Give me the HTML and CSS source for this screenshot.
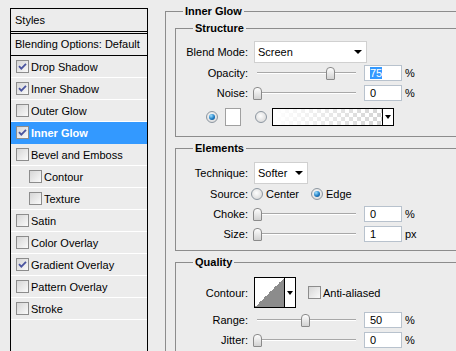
FILE: index.html
```html
<!DOCTYPE html>
<html lang="en">
<head>
    <meta charset="UTF-8">
    <meta name="viewport" content="width=device-width, initial-scale=1.0">
    <title>Layer Style - Inner Glow</title>
    <link rel="stylesheet" href="styles.css">
</head>
<body>
    <div class="styles-panel">
        <div class="panel-head">Styles</div>
        <div class="panel-blend">Blending Options: Default</div>
        <div class="effect"><span class="check"><svg viewBox="0 0 11 11"><path d="M2 5.2 L4.3 7.6 L9 2.8"/></svg></span>Drop Shadow</div>
        <div class="effect"><span class="check"><svg viewBox="0 0 11 11"><path d="M2 5.2 L4.3 7.6 L9 2.8"/></svg></span>Inner Shadow</div>
        <div class="effect"><span class="check"></span>Outer Glow</div>
        <div class="effect active"><span class="check"><svg viewBox="0 0 11 11"><path d="M2 5.2 L4.3 7.6 L9 2.8"/></svg></span>Inner Glow</div>
        <div class="effect"><span class="check"></span>Bevel and Emboss</div>
        <div class="effect sub"><span class="check"></span>Contour</div>
        <div class="effect sub"><span class="check"></span>Texture</div>
        <div class="effect"><span class="check"></span>Satin</div>
        <div class="effect"><span class="check"></span>Color Overlay</div>
        <div class="effect"><span class="check"><svg viewBox="0 0 11 11"><path d="M2 5.2 L4.3 7.6 L9 2.8"/></svg></span>Gradient Overlay</div>
        <div class="effect"><span class="check"></span>Pattern Overlay</div>
        <div class="effect"><span class="check"></span>Stroke</div>
    </div>

    <div class="options">
        <div class="group outer">
            <div class="group-title">Inner Glow</div>

            <!-- Structure -->
            <div class="group structure">
                <div class="group-title">Structure</div>
                <div class="row row-tall first">
                    <span class="label">Blend Mode:</span>
                    <div class="select wide"><span>Screen</span><span class="arrow"></span></div>
                </div>
                <div class="row">
                    <span class="label">Opacity:</span>
                    <div class="slider"><div class="track"></div><div class="thumb" style="left: 72px"></div></div>
                    <div class="field"><span class="sel">75</span></div>
                    <span class="unit">%</span>
                </div>
                <div class="row">
                    <span class="label">Noise:</span>
                    <div class="slider"><div class="track"></div><div class="thumb" style="left: -1px"></div></div>
                    <div class="field">0</div>
                    <span class="unit">%</span>
                </div>
                <div class="row color-row">
                    <span class="radio on first-radio"></span>
                    <span class="swatch"></span>
                    <span class="radio grad-radio"></span>
                    <div class="gradient"><div class="grad-fill"></div><div class="grad-arrow"><span class="arrow"></span></div></div>
                </div>
            </div>

            <!-- Elements -->
            <div class="group elements">
                <div class="group-title">Elements</div>
                <div class="row row-tall first">
                    <span class="label">Technique:</span>
                    <div class="select narrow"><span>Softer</span><span class="arrow"></span></div>
                </div>
                <div class="row">
                    <span class="label">Source:</span>
                    <span class="radio source-radio"></span><span class="radio-text">Center</span>
                    <span class="radio on edge-radio"></span><span class="radio-text">Edge</span>
                </div>
                <div class="row">
                    <span class="label">Choke:</span>
                    <div class="slider"><div class="track"></div><div class="thumb" style="left: -1px"></div></div>
                    <div class="field">0</div>
                    <span class="unit">%</span>
                </div>
                <div class="row">
                    <span class="label">Size:</span>
                    <div class="slider"><div class="track"></div><div class="thumb" style="left: -1px"></div></div>
                    <div class="field">1</div>
                    <span class="unit">px</span>
                </div>
            </div>

            <!-- Quality -->
            <div class="group quality">
                <div class="group-title">Quality</div>
                <div class="row row-contour first">
                    <span class="label">Contour:</span>
                    <div class="contour"><div class="curve"></div><div class="contour-arrow"><span class="arrow"></span></div></div>
                    <span class="check aa"></span><span>Anti-aliased</span>
                </div>
                <div class="row range-row">
                    <span class="label">Range:</span>
                    <div class="slider"><div class="track"></div><div class="thumb" style="left: 47px"></div></div>
                    <div class="field">50</div>
                    <span class="unit">%</span>
                </div>
                <div class="row">
                    <span class="label">Jitter:</span>
                    <div class="slider"><div class="track"></div><div class="thumb" style="left: -1px"></div></div>
                    <div class="field">0</div>
                    <span class="unit">%</span>
                </div>
            </div>
        </div>
    </div>
</body>
</html>
```

FILE: styles.css
```css
* {
    margin: 0;
    padding: 0;
    box-sizing: border-box;
}

html, body {
    height: 100%;
}

body {
    background: #ececec;
    color: #000;
    font-family: "Liberation Sans", Arial, sans-serif;
    font-size: 11px;
    display: flex;
    align-items: flex-start;
    overflow: hidden;
}

/* left list of styles */
.styles-panel {
    margin: 8px 0 0 10px;
    width: 138px;
    height: 343px;
    flex-shrink: 0;
    border: 1px solid #000;
    border-bottom: none;
}

.panel-head {
    height: 23px;
    line-height: 22px;
    padding-left: 4px;
    border-bottom: 1px solid #000;
}

.panel-blend {
    height: 23px;
    line-height: 21px;
    margin-top: 1px;
    padding-left: 4px;
    border-top: 1px solid #000;
    border-bottom: 1px solid #000;
}

.effect {
    height: 22px;
    display: flex;
    align-items: center;
    padding-left: 5px;
    border-bottom: 1px solid #fff;
}

.effect.sub {
    padding-left: 18px;
}

.effect.active {
    background: #3399ff;
    border-bottom-color: #3399ff;
    color: #fff;
    font-weight: bold;
}

.check {
    width: 13px;
    height: 13px;
    margin-right: 2px;
    border: 1px solid #8c8c8c;
    background: linear-gradient(135deg, #d6d6d6, #fafafa);
    flex-shrink: 0;
}

.check svg {
    display: block;
    width: 11px;
    height: 11px;
}

.check path {
    fill: none;
    stroke: #4b55a0;
    stroke-width: 1.8;
}

/* right options, clipped on the right like the dialog */
.options {
    margin: 4px 0 0 17px;
    padding-top: 7px;
    width: 291px;
    height: 347px;
    overflow: hidden;
    flex-shrink: 0;
}

.group {
    border: 1px solid #8c8c8c;
}

.outer {
    width: 340px;
    height: 340px;
    border-bottom: none;
}

.group-title {
    display: table;
    margin: -7px 0 0 17px;
    padding: 0 2px;
    line-height: 13px;
    background: #ececec;
    font-weight: bold;
}

.structure {
    margin: 10px 0 0 9px;
    padding-bottom: 9px;
}

.elements {
    margin: 11px 0 0 9px;
    padding-bottom: 6px;
}

.quality {
    margin: 11px 0 0 9px;
    padding-bottom: 20px;
}

.row {
    height: 20px;
    display: flex;
    align-items: center;
}

.row.first {
    margin-top: 6px;
}

.elements .row.first {
    margin-top: 7px;
}

.row-tall {
    height: 22px;
}

.label {
    width: 72px;
    margin-right: 6px;
    text-align: right;
    flex-shrink: 0;
}

.select {
    height: 22px;
    display: flex;
    align-items: center;
    justify-content: space-between;
    padding: 0 4px 0 3px;
    border: 1px solid #d0d0d0;
    background: #fff;
}

.select.wide {
    width: 113px;
}

.select.narrow {
    width: 54px;
}

.arrow {
    width: 0;
    height: 0;
    border-left: 4px solid transparent;
    border-right: 4px solid transparent;
    border-top: 4px solid #000;
}

.slider {
    position: relative;
    width: 104px;
    height: 20px;
    margin-right: 6px;
    flex-shrink: 0;
}

.track {
    position: absolute;
    left: 3px;
    right: 2px;
    top: 9px;
    height: 2px;
    border-top: 1px solid #a8a8a8;
    background: #fff;
}

.thumb {
    position: absolute;
    top: 4px;
    width: 9px;
    height: 13px;
    border: 1px solid #8a8a8a;
    border-radius: 4px 4px 1px 1px;
    background: linear-gradient(#fdfdfd, #d2d2d2);
}

.field {
    width: 38px;
    height: 16px;
    padding-left: 5px;
    line-height: 14px;
    border: 1px solid #b8c2cd;
    background: #fff;
    flex-shrink: 0;
}

.sel {
    background: #3399ff;
    color: #fff;
}

.unit {
    margin-left: 3px;
}

/* colour / gradient row */
.color-row {
    margin-top: 4px;
}

.radio {
    position: relative;
    width: 12px;
    height: 12px;
    border-radius: 50%;
    border: 1px solid #8d97a1;
    background: radial-gradient(circle at 45% 40%, #fdfdfd, #d2d2d2);
    flex-shrink: 0;
}

.radio.on::after {
    content: "";
    position: absolute;
    left: 2px;
    top: 2px;
    width: 6px;
    height: 6px;
    border-radius: 50%;
    background: radial-gradient(circle at 35% 30%, #9fe0ff, #1f7dc4 55%, #0c3f74);
}

.first-radio {
    margin-left: 30px;
}

.swatch {
    width: 16px;
    height: 18px;
    margin-left: 7px;
    border: 1px solid #a0a0a0;
    background: #fff;
}

.grad-radio {
    margin-left: 14px;
}

.gradient {
    width: 122px;
    height: 18px;
    margin-left: 5px;
    display: flex;
    border: 1px solid #000;
}

.grad-fill {
    flex: 1;
    background:
        linear-gradient(to right, #fff, rgba(255, 255, 255, 0)),
        repeating-conic-gradient(#d4d4d4 0 25%, #fff 0 50%) 0 0 / 8px 8px;
}

.grad-arrow {
    width: 11px;
    display: flex;
    align-items: center;
    justify-content: center;
    border-left: 1px solid #000;
    background: #fff;
}

.grad-arrow .arrow {
    border-left-width: 3px;
    border-right-width: 3px;
}

/* source radios */
.source-radio {
    margin-left: -3px;
}

.radio-text {
    margin-left: 3px;
}

.edge-radio {
    margin-left: 12px;
}

/* contour */
.row-contour {
    height: 31px;
}

.quality .row.first {
    margin-top: 8px;
}

.contour {
    width: 42px;
    height: 31px;
    display: flex;
    border: 1px solid #000;
}

.curve {
    width: 29px;
    background: linear-gradient(to top left, #8c8c8c 50%, #fff 50%);
}

.contour-arrow {
    flex: 1;
    display: flex;
    align-items: center;
    justify-content: center;
    border-left: 1px solid #000;
    background: #fff;
}

.contour-arrow .arrow {
    border-left-width: 3px;
    border-right-width: 3px;
}

.check.aa {
    margin-left: 12px;
}

.range-row {
    margin-top: 2px;
}
```
